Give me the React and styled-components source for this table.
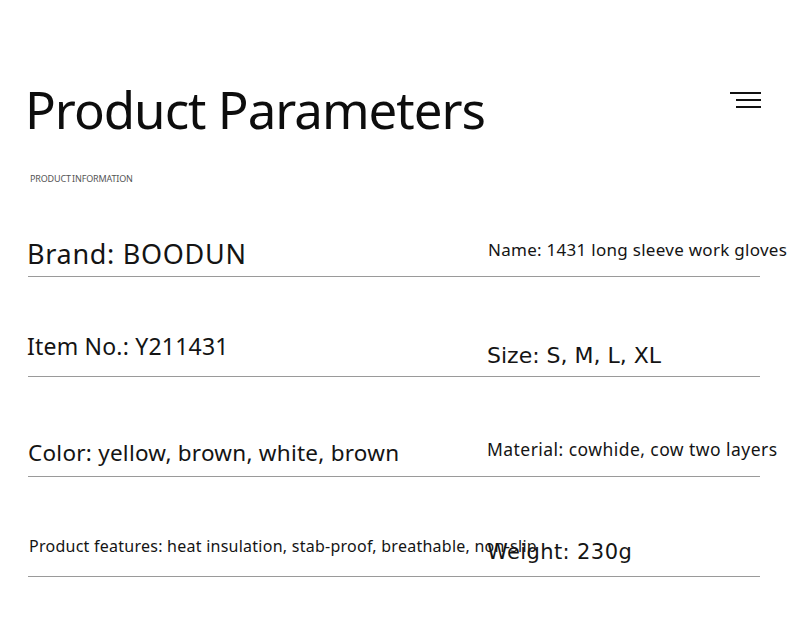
import React from 'react';
import styled, { createGlobalStyle } from 'styled-components';

const GlobalStyle = createGlobalStyle`
  body {
    margin: 0;
    background: #ffffff;
    font-family: 'Noto Sans', 'Open Sans', sans-serif;
    color: #111111;
  }
`;

const Page = styled.div`
  width: 790px;
  height: 638px;
  padding-top: 84px;
  box-sizing: border-box;
  overflow: hidden;
`;

const Header = styled.header`
  display: flex;
  justify-content: space-between;
  align-items: flex-start;
  padding: 0 29px 0 25px;
`;

const Title = styled.h1`
  margin: 0;
  font-size: 51px;
  line-height: 1;
  font-weight: 400;
  letter-spacing: -1px;
  color: #0d0d0d;
`;

const MenuIcon = styled.div`
  display: flex;
  flex-direction: column;
  align-items: flex-end;
  gap: 5px;
  margin-top: 8px;
`;

const MenuLine = styled.span`
  display: block;
  width: ${({ $w }) => $w}px;
  height: 2px;
  background: #111111;
`;

const Subtitle = styled.p`
  margin: 39px 0 0 30px;
  font-size: 9px;
  line-height: 9px;
  color: #555555;
  letter-spacing: -0.15px;
  word-spacing: -1px;
`;

const Table = styled.div`
  display: grid;
  grid-template-columns: minmax(0, 1fr);
  grid-template-rows: 94px repeat(3, 100px);
  margin: 0 30px 0 28px;
`;

const Row = styled.div`
  display: grid;
  grid-template-columns: 459px minmax(0, 1fr);
  border-bottom: 1px solid #9a9a9a;
  box-sizing: border-box;
  min-width: 0;
`;

const Cell = styled.div`
  align-self: end;
  min-width: 0;
  margin-left: ${({ $indent = 0 }) => $indent}px;
  padding-bottom: ${({ $lift }) => $lift}px;
  font-family: ${({ $wide }) =>
    $wide ? "'DejaVu Sans', sans-serif" : "'Noto Sans', 'Open Sans', sans-serif"};
  font-size: ${({ $size }) => $size}px;
  letter-spacing: ${({ $track = 0 }) => $track}px;
  line-height: 1;
  white-space: nowrap;
  color: #141414;
`;

const rows = [
  [
    { text: 'Brand: BOODUN', size: 27, lift: 9, indent: -1, track: 0.7 },
    { text: 'Name: 1431 long sleeve work gloves', size: 17, lift: 18, indent: 1, track: 0.28 },
  ],
  [
    { text: 'Item No.: Y211431', size: 23, lift: 18, indent: -1, track: 0.2 },
    { text: 'Size: S, M, L, XL', size: 22, lift: 9, indent: 0, wide: true },
  ],
  [
    { text: 'Color: yellow, brown, white, brown', size: 22.5, lift: 12, indent: 0, track: 0.25 },
    { text: 'Material: cowhide, cow two layers', size: 17.5, lift: 18, indent: 0, track: 0.45 },
  ],
  [
    { text: 'Product features: heat insulation, stab-proof, breathable, non-slip', size: 16, lift: 22, indent: 1, track: 0.25 },
    { text: 'Weight: 230g', size: 21, lift: 13, indent: 0, wide: true, track: 0.4 },
  ],
];

export default function App() {
  return (
    <Page>
      <GlobalStyle />
      <Header>
        <Title>Product Parameters</Title>
        <MenuIcon>
          <MenuLine $w={31} />
          <MenuLine $w={25} />
          <MenuLine $w={25} />
        </MenuIcon>
      </Header>
      <Subtitle>PRODUCT INFORMATION</Subtitle>
      <Table>
        {rows.map((row, i) => (
          <Row key={i}>
            {row.map((c, j) => (
              <Cell
                key={j}
                $size={c.size}
                $lift={c.lift}
                $indent={c.indent}
                $wide={c.wide}
                $track={c.track}
              >
                {c.text}
              </Cell>
            ))}
          </Row>
        ))}
      </Table>
    </Page>
  );
}
